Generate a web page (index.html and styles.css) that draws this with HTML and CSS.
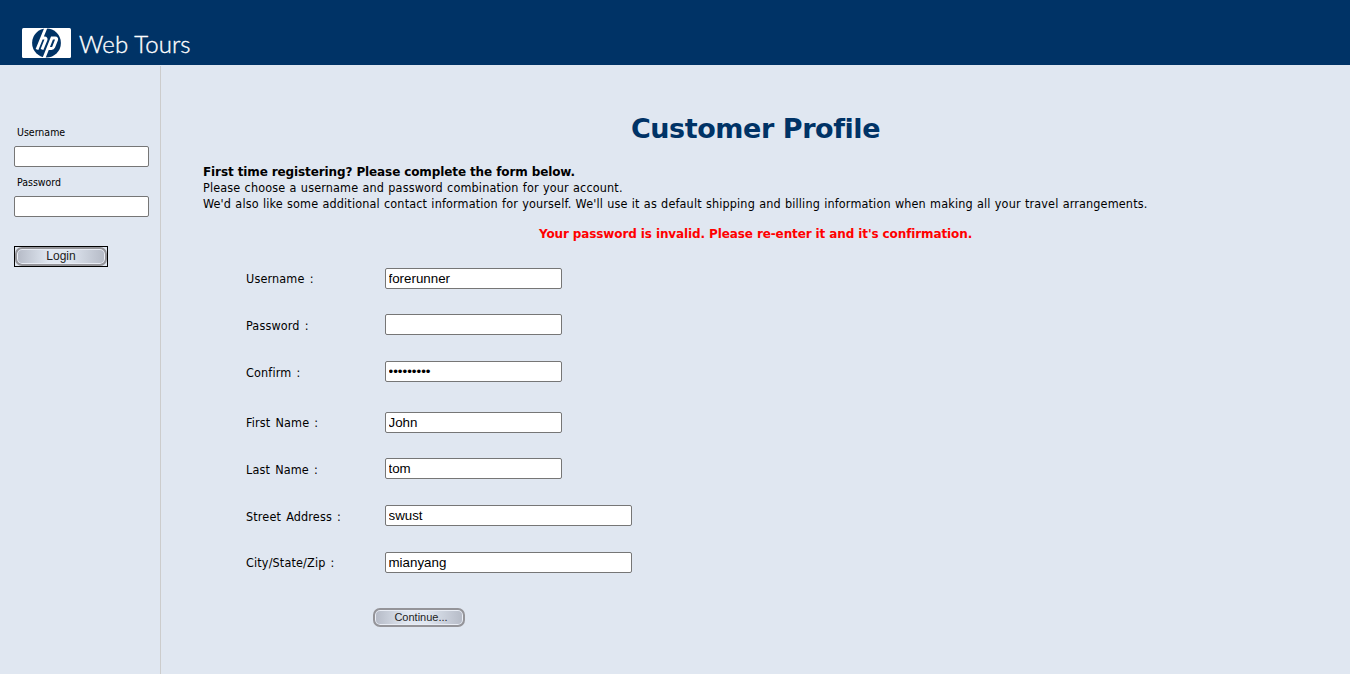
FILE: index.html
```html
<!DOCTYPE html>
<html lang="en">
<head>
<meta charset="utf-8">
<title>Web Tours</title>
<link rel="stylesheet" href="styles.css">
</head>
<body>
<header class="banner">
  <svg class="logo" width="49" height="30" viewBox="0 0 49 30" role="img" aria-label="hp">
    <rect width="49" height="30" rx="1.5" fill="#fff"/>
    <circle cx="24.5" cy="15" r="14.4" fill="#036"/>
    <g fill="none" stroke="#fff" stroke-width="2.9">
      <path d="M24 -.5 15 21.5M19.8 10h2.8q2 0 1.3 1.9L20 21.5"/>
      <path d="M21.8 30.5 30 10h3.2q2 0 1.3 1.9L31.7 19q-.6 1.5-2.2 1.5h-3.3"/>
    </g>
  </svg>
  <span class="brand">Web Tours</span>
</header>
<div class="frames">
  <aside class="side">
    <form class="login">
      <label class="side-label" for="u">Username</label>
      <input class="field side-field" id="u" type="text">
      <label class="side-label second" for="p">Password</label>
      <input class="field side-field" id="p" type="password">
      <button class="login-button" type="button"><span class="pill login-pill">Login</span></button>
    </form>
  </aside>
  <main class="content">
    <h1 class="title">Customer Profile</h1>
    <div class="intro">
      <div class="strong">First time registering? Please complete the form below.</div>
      <div>Please choose a username and password combination for your account.</div>
      <div>We'd also like some additional contact information for yourself. We'll use it as default shipping and billing information when making all your travel arrangements.</div>
    </div>
    <p class="error strong">Your password is invalid. Please re-enter it and it's confirmation.</p>
    <form class="profile">
      <div class="row"><label class="label">Username :</label><input class="field" type="text" value="forerunner"></div>
      <div class="row tall"><label class="label low">Password :</label><input class="field" type="password"></div>
      <div class="row group-end"><label class="label low">Confirm :</label><input class="field" type="password" value="password1"></div>
      <div class="row"><label class="label">First Name :</label><input class="field" type="text" value="John"></div>
      <div class="row tall"><label class="label low">Last Name :</label><input class="field" type="text" value="tom"></div>
      <div class="row tall"><label class="label low">Street Address :</label><input class="field wide" type="text" value="swust"></div>
      <div class="row last"><label class="label">City/State/Zip :</label><input class="field wide" type="text" value="mianyang"></div>
      <button class="pill continue" type="button">Continue...</button>
    </form>
  </main>
</div>
</body>
</html>
```
FILE: styles.css
```css
* { box-sizing: border-box; }
body {
  margin: 0;
  height: 674px;
  overflow: hidden;
  background: #e0e7f1;
  color: #000;
  font: 12.5px/16px "DejaVu Sans Condensed", "DejaVu Sans", sans-serif;
}
.banner {
  display: flex;
  height: 65px;
  padding: 28px 0 0 22px;
  background: #036;
}
.logo { flex: none; }
.brand {
  margin: 1px 0 0 8px;
  color: #fff;
  font: 300 24px/30px Lato, sans-serif;
  letter-spacing: .1px;
  -webkit-text-stroke: .35px #fff;
  white-space: nowrap;
}
.frames { display: flex; height: 609px; padding-top: 1px; }
.side {
  width: 161px;
  padding: 58px 0 0 14px;
  border-right: 1px solid #ccc;
}
.login { display: flex; flex-direction: column; align-items: flex-start; }
.side-label {
  height: 16px;
  margin: 0 0 6px 3px;
  font-size: 10.5px;
}
.second { margin-top: 7px; }
.field {
  width: 177px;
  height: 21px;
  padding: 1px 2.5px;
  border: 1px solid #767676;
  border-radius: 2px;
  background: #fff;
  font: 13.333px "Liberation Sans", Arial, sans-serif;
  outline: none;
}
.side-field { width: 135px; }
.login-button {
  width: 94px;
  height: 21px;
  margin-top: 29px;
  padding: 0;
  border: 1px solid #000;
  background: #e0e7f1;
}
.pill {
  display: block;
  border: 2px solid #949499;
  border-radius: 7px;
  background: linear-gradient(90deg, #b5bac6, #e0e7f1 36%, #e0e7f1 58%, #b5bac6);
  box-shadow: inset 0 0 0 1px #e9edf5;
  color: #222;
  font: 12px/14px "Liberation Sans", Arial, sans-serif;
  text-align: center;
}
.login-pill { height: 19px; }
.content { flex: 1; padding: 43px 0 0 42px; }
.title {
  width: 1105px;
  margin: 0;
  color: #036;
  font-family: "DejaVu Sans", sans-serif;
  font-size: 27px;
  line-height: 40px;
  letter-spacing: -.42px;
  text-align: center;
}
.intro {
  margin-top: 15px;
  letter-spacing: .15px;
  word-spacing: .5px;
  white-space: nowrap;
}
.strong {
  font-family: "DejaVu Sans", sans-serif;
  font-size: 12px;
  font-weight: bold;
  letter-spacing: -.11px;
  word-spacing: 0;
}
.error {
  width: 1105px;
  margin: 14px 0 0;
  color: #f00;
  text-align: center;
}
.profile { padding: 26px 0 0 43px; }
.row { display: flex; height: 46px; }
.tall { height: 47px; }
.group-end { height: 51px; }
.last { height: 56px; }
.label {
  width: 139px;
  padding-top: 3px;
  letter-spacing: .15px;
  word-spacing: 1.4px;
}
.low { padding-top: 4px; }
.wide { width: 247px; }
.continue {
  width: 92px;
  height: 19px;
  margin-left: 127px;
  padding: 0 0 1px 4px;
  font-size: 11px;
  line-height: 13px;
}
```
